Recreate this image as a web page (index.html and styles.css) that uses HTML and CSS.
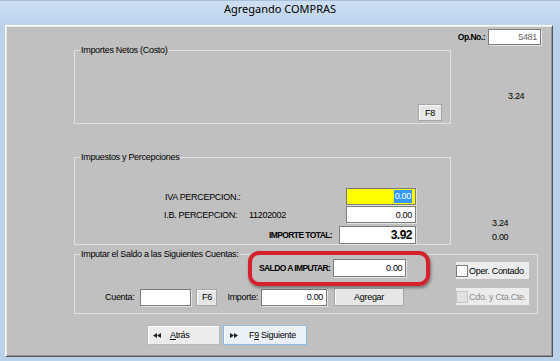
FILE: index.html
```html
<!DOCTYPE html>
<html lang="es">
	<head>
		<title>Agregando COMPRAS</title>
		<meta charset="utf-8">
		<meta name="viewport" content="width=device-width, initial-scale=1">
		<link rel="stylesheet" href="styles.css">
	</head>
	<body>
		<div class="window">

			<div class="titlebar">Agregando COMPRAS</div>

			<div class="client">

				<div class="opno">
					<span class="opno-label">Op.No.:</span>
					<span class="field field-opno">5481</span>
				</div>

				<div class="row row-netos">
					<div class="group group-netos">
						<span class="group-title">Importes Netos (Costo)</span>
						<div class="netos-body">
							<button class="btn btn-f8">F8</button>
						</div>
					</div>
					<div class="side side-netos"><span>3.24</span></div>
				</div>

				<div class="row row-imp">
					<div class="group group-imp">
						<span class="group-title">Impuestos y Percepciones</span>
						<div class="imp-body">
							<div class="imp-line">
								<span class="imp-label">IVA PERCEPCION.:</span>
								<span class="field field-iva field-focus"><span class="sel">0.00</span></span>
							</div>
							<div class="imp-line imp-line2">
								<span class="imp-label imp-label-ib">I.B. PERCEPCION:</span>
								<span class="imp-code">11202002</span>
								<span class="field field-iva">0.00</span>
							</div>
							<div class="imp-line imp-total">
								<span class="total-label">IMPORTE TOTAL:</span>
								<span class="field field-total">3.92</span>
							</div>
						</div>
					</div>
					<div class="side side-imp"><span>3.24</span><span>0.00</span></div>
				</div>

				<div class="group group-saldo">
					<span class="group-title">Imputar el Saldo a las Siguientes Cuentas:</span>
					<div class="saldo-body">
						<div class="saldo-left">
							<div class="saldo-line1">
								<span class="saldo-label">SALDO A IMPUTAR:</span>
								<span class="field field-saldo">0.00</span>
							</div>
							<div class="saldo-line2">
								<span>Cuenta:</span>
								<span class="field field-cuenta"></span>
								<button class="btn btn-f6">F6</button>
								<span class="importe-label">Importe:</span>
								<span class="field field-importe">0.00</span>
								<button class="btn btn-agregar">Agregar</button>
							</div>
						</div>
						<div class="checks">
							<label class="check"><span class="box"></span>Oper. Contado</label>
							<label class="check check-off"><span class="box"></span>Cdo. y Cta.Cte.</label>
						</div>
					</div>
					<div class="highlight"></div>
				</div>

				<div class="nav">
					<button class="navbtn navbtn-back">
						<svg width="8" height="5" viewBox="0 0 8 5"><polygon points="0,2.5 4,0 4,5"/><polygon points="4,2.5 8,0 8,5"/></svg>
						<span><u>A</u>trás</span>
					</button>
					<button class="navbtn navbtn-next">
						<svg width="8" height="5" viewBox="0 0 8 5"><polygon points="0,0 4,2.5 0,5"/><polygon points="4,0 8,2.5 4,5"/></svg>
						<span>F<u>9</u> Siguiente</span>
					</button>
				</div>

			</div>
		</div>
	</body>
</html>
```

FILE: styles.css
```css
/*
 * RESET / FONTS
 */
* { margin: 0; padding: 0; box-sizing: border-box; }
body {
	background: #bad2ec;
	font-family: "Liberation Sans", Arial, sans-serif;
	font-size: 9px; letter-spacing: -0.3px;
	white-space: nowrap;
	color: #000;
}
button { font: inherit; color: inherit; letter-spacing: inherit; }

/*
 * WINDOW
 */
.window { height: 361px; display: flex; flex-direction: column; }
.titlebar {
	height: 25px; line-height: 27px;
	text-align: center;
	font: 11px "Noto Sans", sans-serif; letter-spacing: 0;
	background: linear-gradient(#cddff2, #bcd4ee);
	border-top: 1px solid #a9c0da;
}
.client {
	margin: 0 7px 0 5px;
	height: 332px;
	background: #c0c0c0;
	border: 1px solid; border-color: #fff #555 #555 #fff;
	box-shadow: inset 1px 1px #e6e6e6, inset -1px -1px #959595;
}

/*
 * CONTROLS
 */
.field {
	display: flex; align-items: center; justify-content: flex-end;
	height: 17px; padding-right: 3px;
	background: #fff;
	border: 1px solid #7c7c7c;
	box-shadow: 1px 1px 0 #e2e2e2;
}
.btn {
	height: 17px;
	background: #e6e6e6;
	border: 1px solid #a6a6a6;
	box-shadow: inset 1px 1px #fafafa;
}
.group {
	border: 1px solid #e0e0e0;
	display: flex; flex-direction: column;
}
.group-title {
	display: block; width: max-content;
	margin: -7px 0 -5px 5px; padding: 0 1px;
	line-height: 12px;
	background: #c0c0c0;
}

/*
 * TOP
 */
.opno {
	display: flex; justify-content: flex-end; align-items: center;
	margin-top: 3px; padding-right: 11px;
	height: 16px;
}
.opno-label { font-weight: bold; font-size: 8.5px; letter-spacing: -0.5px; margin-right: 3px; }
.field-opno { width: 53px; height: 16px; color: #666; }

.row { display: flex; padding-left: 68px; }
.row-netos { margin-top: 5px; }
.row-imp { margin-top: 33px; }
.side { flex: 1; display: flex; flex-direction: column; line-height: 14px; }
.side-netos { padding: 39px 0 0 57px; }
.side-imp { padding: 59px 0 0 41px; }

/* importes netos */
.group-netos { width: 377px; height: 74px; }
.netos-body {
	flex: 1;
	display: flex; justify-content: flex-end; align-items: flex-end;
	padding: 0 8px 2px 0;
}
.btn-f8 { width: 24px; }

/* impuestos */
.group-imp { width: 377px; height: 88px; }
.imp-body {
	flex: 1;
	display: flex; flex-direction: column; justify-content: flex-end;
	padding: 0 34px 0 90px;
}
.imp-line { display: flex; align-items: center; }
.imp-line2 { margin-top: 1px; }
.imp-label { flex: 1; }
.imp-label-ib { flex: none; width: 85px; margin-left: -1px; }
.imp-code { flex: 1; }
.field-iva { width: 70px; }
.field-focus { background: #ffff00; }
.sel { background: #3399ff; color: #fff; line-height: 13px; padding: 0 1px; }
.imp-total { justify-content: flex-end; margin-top: 3px; }
.total-label { font-weight: bold; font-size: 8.5px; letter-spacing: -0.6px; margin-right: 7px; }
.field-total { width: 77px; height: 18px; font-weight: bold; font-size: 12px; letter-spacing: -0.5px; }

/* saldo */
.group-saldo {
	position: relative;
	width: 464px; height: 60px;
	margin: 9px 0 0 68px;
}
.saldo-body { flex: 1; display: flex; }
.saldo-left { flex: 1; padding-top: 4px; }
.saldo-line1 { display: flex; align-items: center; padding-left: 184px; }
.saldo-label { font-weight: bold; font-size: 8.5px; letter-spacing: -0.6px; margin-right: 3px; }
.field-saldo { width: 73px; height: 18px; }
.saldo-line2 { display: flex; align-items: center; margin-top: 11px; padding-left: 30px; }
.field-cuenta { width: 51px; margin-left: 6px; }
.btn-f6 { width: 21px; margin-left: 5px; }
.importe-label { margin-left: 10px; }
.field-importe { width: 66px; margin-left: 3px; }
.btn-agregar { width: 70px; height: 18px; margin-left: 7px; }

.checks { width: 73px; margin-right: 8px; padding-top: 7px; display: flex; flex-direction: column; gap: 9px; }
.check {
	display: flex; align-items: center;
	height: 17px;
	background: #ececec;
}
.box {
	width: 12px; height: 12px; margin-right: 1px;
	background: #fff; border: 1px solid #7a7a7a;
}
.check-off { color: #8a8a8a; }
.check-off .box { background: #e2e2e2; border-color: #c4c4c4; }

.highlight {
	position: absolute; left: 173px; top: -4px;
	width: 182px; height: 35px;
	border: 4px solid #d3222a; border-radius: 11px;
	box-shadow: 1px 2px 3px rgba(0, 0, 0, 0.4);
}

/* nav */
.nav { display: flex; gap: 3px; margin-top: 11px; padding-left: 141px; }
.navbtn {
	display: flex; align-items: center;
	height: 20px;
	background: #ececec;
	border: 1px solid #b8b8b8;
	box-shadow: inset 1px 1px #fff;
}
.navbtn svg { fill: #222; }
.navbtn-back { width: 73px; padding-left: 5px; gap: 9px; }
.navbtn-next { width: 84px; padding-left: 6px; gap: 11px; background: #eaf1f9; border-color: #8cbbea; }
```
